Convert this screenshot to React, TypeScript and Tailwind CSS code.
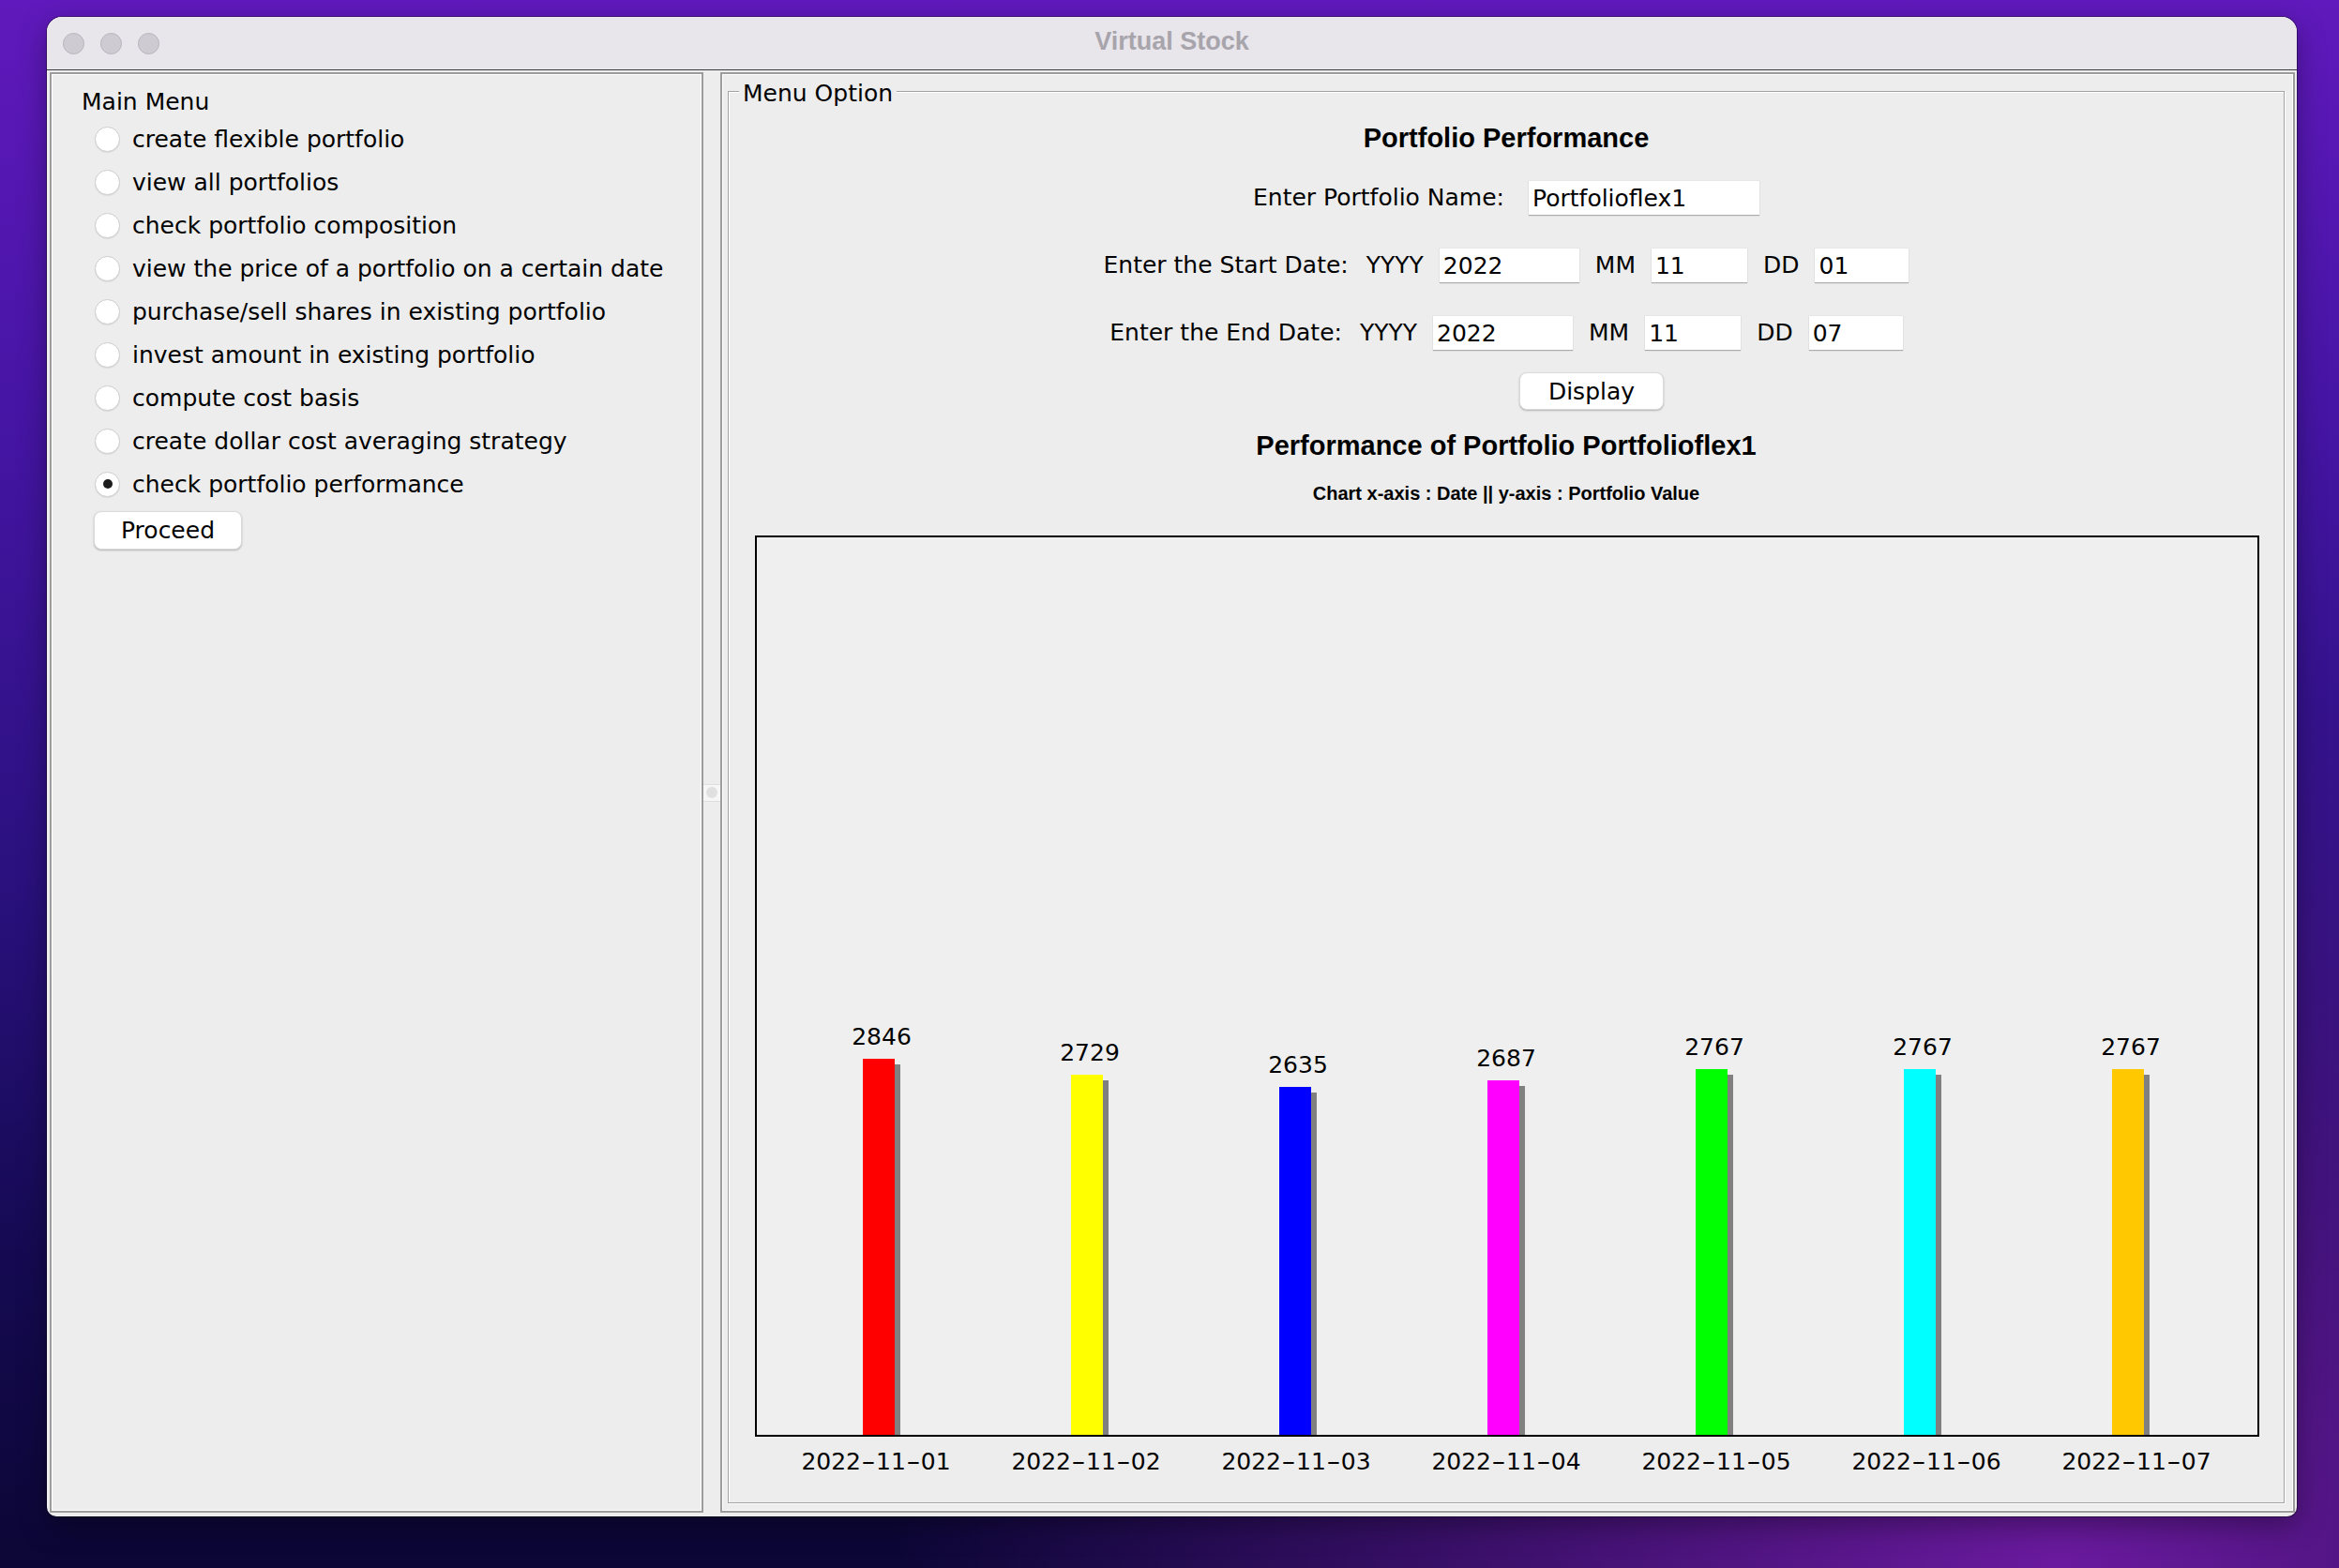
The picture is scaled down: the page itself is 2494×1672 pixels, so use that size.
const menu = [
  "create flexible portfolio",
  "view all portfolios",
  "check portfolio composition",
  "view the price of a portfolio on a certain date",
  "purchase/sell shares in existing portfolio",
  "invest amount in existing portfolio",
  "compute cost basis",
  "create dollar cost averaging strategy",
  "check portfolio performance",
];

const bars = [
  { date: "2022-11-01", value: 2846, color: "bg-[#ff0000]" },
  { date: "2022-11-02", value: 2729, color: "bg-[#ffff00]" },
  { date: "2022-11-03", value: 2635, color: "bg-[#0000ff]" },
  { date: "2022-11-04", value: 2687, color: "bg-[#ff00ff]" },
  { date: "2022-11-05", value: 2767, color: "bg-[#00ff00]" },
  { date: "2022-11-06", value: 2767, color: "bg-[#00ffff]" },
  { date: "2022-11-07", value: 2767, color: "bg-[#ffc800]" },
];

function Field({ value, width }: { value: string; width: string }) {
  return (
    <div
      className={`${width} h-[37px] bg-white pl-[4px] flex items-center border-t border-[#e6e6e6] shadow-[0_1px_1px_rgba(0,0,0,0.28)]`}
    >
      {value}
    </div>
  );
}

function DateRow({ label, y, m, d }: { label: string; y: string; m: string; d: string }) {
  return (
    <div className="mt-[35px] h-[37px] flex items-center gap-[17px]">
      <span className="mr-[2px]">{label}</span>
      <span>YYYY</span>
      <Field value={y} width="w-[149px]" />
      <span>MM</span>
      <Field value={m} width="w-[102px]" />
      <span>DD</span>
      <Field value={d} width="w-[100px]" />
    </div>
  );
}

function DateLabel({ date }: { date: string }) {
  const parts = date.split("-");
  return (
    <span className="whitespace-nowrap">
      {parts.map((p, i) => (
        <span key={i}>
          {i > 0 && <span className="inline-block w-[16px] text-center scale-x-[1.7]">-</span>}
          {p}
        </span>
      ))}
    </span>
  );
}

export default function App() {
  return (
    <div className="w-[2494px] h-[1672px] overflow-hidden pl-[50px] pt-[18px] bg-[radial-gradient(ellipse_at_88%_100%,#6a1a9e_0%,rgba(106,26,158,0)_40%),linear-gradient(180deg,#6019bc_0%,#4715a6_25%,#2b1180_55%,#150a52_80%,#0c0635_100%)] font-['DejaVu_Sans',sans-serif] text-black">
      <div className="w-[2399px] h-[1599px] rounded-t-[16px] rounded-b-[10px] overflow-hidden bg-[#ededed] shadow-[0_0_0_1px_rgba(0,0,0,0.35),0_10px_30px_rgba(0,0,0,0.35)] flex flex-col">
        {/* title bar */}
        <div className="h-[57px] shrink-0 bg-[#e8e5eb] border-b border-[#3c3c3c] grid grid-cols-[1fr_auto_1fr] items-center">
          <div className="flex items-center gap-[17px] pl-[17px]">
            <div className="w-[23px] h-[23px] rounded-full bg-[#cfcbd3] border border-[#b9b5bc]" />
            <div className="w-[23px] h-[23px] rounded-full bg-[#cfcbd3] border border-[#b9b5bc]" />
            <div className="w-[23px] h-[23px] rounded-full bg-[#cfcbd3] border border-[#b9b5bc]" />
          </div>
          <div className="font-['Liberation_Sans',Arial,sans-serif] font-bold text-[27px] text-[#a7a4ab] -mt-[4px]">
            Virtual Stock
          </div>
          <div />
        </div>

        {/* content */}
        <div className="flex-1 flex pl-[3px] pr-[2px] pt-[2px] pb-[4px] text-[25px] leading-[29px]">
          {/* left panel */}
          <div className="w-[697px] shrink-0 border-2 border-[#9c9c9c] shadow-[inset_0_0_0_1px_#fff] pl-[32px] pt-[15px]">
            <div>Main Menu</div>
            <div className="mt-[2px] pl-[14px]">
              {menu.map((item, i) => (
                <div key={item} className="h-[46px] flex items-center gap-[13px]">
                  <div className="w-[27px] h-[27px] rounded-full bg-white border border-[#cdcdcd] shadow-[0_1px_1px_rgba(0,0,0,0.08)] flex items-center justify-center">
                    {i === menu.length - 1 && (
                      <div className="w-[10px] h-[10px] rounded-full bg-[#1c1c1c]" />
                    )}
                  </div>
                  <span>{item}</span>
                </div>
              ))}
              <button className="mt-[6px] -ml-[1px] w-[158px] h-[41px] bg-white rounded-[8px] border border-[#dadada] shadow-[0_1px_2px_rgba(0,0,0,0.25)]">
                Proceed
              </button>
            </div>
          </div>

          {/* splitter */}
          <div className="w-[18px] shrink-0 flex items-center">
            <div className="w-full h-[19px] bg-[#f6f6f6] border-y border-[#dedede] flex items-center justify-center">
              <div className="w-[12px] h-[12px] rounded-full bg-[#e0e0e0]" />
            </div>
          </div>

          {/* right panel */}
          <div className="flex-1 flex border-2 border-[#9c9c9c] shadow-[inset_0_0_0_1px_#fff] pl-[6px] pt-[18px] pr-[9px] pb-[8px]">
            <div className="relative flex-1 flex flex-col items-center border border-[#a2a2a2] shadow-[inset_1px_1px_0_#fff,1px_1px_0_#fff]">
              <span className="absolute left-[11px] top-[-13px] px-[4px] bg-[#ededed]">Menu Option</span>

              <div className="mt-[32px] font-['Liberation_Sans',Arial,sans-serif] font-bold text-[29px] leading-[34px]">
                Portfolio Performance
              </div>

              <div className="mt-[28px] h-[37px] flex items-center gap-[26px]">
                <span>Enter Portfolio Name:</span>
                <Field value="Portfolioflex1" width="w-[246px]" />
              </div>

              <DateRow label="Enter the Start Date:" y="2022" m="11" d="01" />
              <DateRow label="Enter the End Date:" y="2022" m="11" d="07" />

              <div className="mt-[24px] pl-[182px] flex">
                <button className="w-[154px] h-[40px] bg-white rounded-[8px] border border-[#dadada] shadow-[0_1px_2px_rgba(0,0,0,0.25)]">
                  Display
                </button>
              </div>

              <div className="mt-[21px] font-['Liberation_Sans',Arial,sans-serif] font-bold text-[29px] leading-[34px]">
                Performance of Portfolio Portfolioflex1
              </div>
              <div className="mt-[22px] font-['Liberation_Sans',Arial,sans-serif] font-bold text-[20px] leading-[24px]">
                Chart x-axis : Date || y-axis : Portfolio Value
              </div>

              {/* chart */}
              <div className="self-start ml-[28px] mt-[33px] w-[1604px] h-[961px] shrink-0 border-2 border-black bg-[#efefef] flex items-end pl-[113px] gap-[182px]">
                {bars.map((b) => {
                  const h = Math.round(b.value * 0.1408);
                  return (
                    <div key={b.date} className="w-[40px] flex flex-col items-center">
                      <span className="mb-[9px] whitespace-nowrap">{b.value}</span>
                      <div className="w-[40px] flex items-end">
                        <div className={`w-[34px] ${b.color}`} style={{ height: h }} />
                        <div className="w-[6px] bg-[#808080]" style={{ height: h - 6 }} />
                      </div>
                    </div>
                  );
                })}
              </div>

              <div className="self-start ml-[45px] mt-[12px] flex">
                {bars.map((b) => (
                  <div key={b.date} className="w-[224px] text-center">
                    <DateLabel date={b.date} />
                  </div>
                ))}
              </div>
            </div>
          </div>
        </div>
      </div>
    </div>
  );
}
